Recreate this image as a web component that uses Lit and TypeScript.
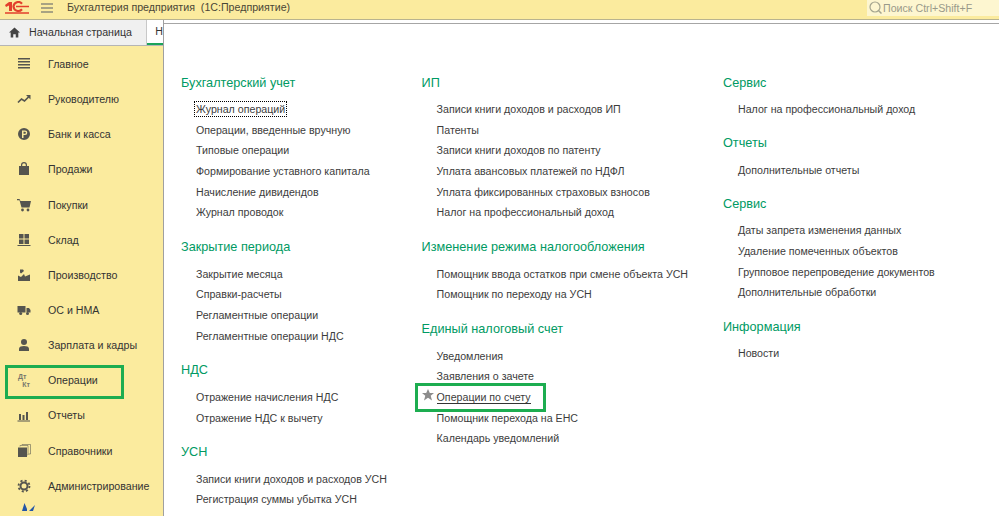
import { LitElement, html, css, svg } from "lit";
import { customElement } from "lit/decorators.js";

const ICONS: Record<string, unknown> = {
  main: svg`<path d="M1 1h12v1.500H1zM1 4h12v1.500H1zM1 7h12v1.500H1zM1 10h12v1.500H1z"/>`,
  chart: svg`<path fill="none" stroke="currentColor" stroke-width="1.700" d="M1 10.500L4.500 7l3 2L12 4.500"/><path d="M9 3h4.500v4.500z"/>`,
  bank: svg`<path fill-rule="evenodd" d="M7 1a6 6 0 1 0 0 12A6 6 0 0 0 7 1zM5 3.500h3a2.300 2.300 0 0 1 0 4.600H6.500V11H5zm1.500 1.300v2h1.400a1 1 0 0 0 0-2z"/>`,
  bag: svg`<path fill-rule="evenodd" d="M2 4h2V3a3 3 0 0 1 6 0v1h2v9H2zM5.200 4h3.600V3a1.800 1.800 0 0 0-3.600 0z"/>`,
  cart: svg`<path d="M0 1h2.500l1 2H14l-1.500 6.500H4.500L2.500 2.200H0z"/><circle cx="5.500" cy="12" r="1.400"/><circle cx="11" cy="12" r="1.400"/>`,
  stock: svg`<path d="M2 1h4.500v4.500H2zM7.500 1H12v4.500H7.500zM2 6.500h4.500V11H2zM7.500 6.500H12V11H7.500zM.5 12h13v1H.5z"/>`,
  factory: svg`<path d="M1 13V7.500l3 1.500 3-3 1 2.500 5-2V13z"/><path d="M3 1.500h3l1 1.500-3 2.500-1-1z"/>`,
  truck: svg`<path d="M.5 3h8v6.500h-8zM9.500 5h2.500l1.500 2v2.500h-4z"/><circle cx="3.700" cy="10.500" r="1.500"/><circle cx="10.500" cy="10.500" r="1.500"/>`,
  person: svg`<circle cx="7" cy="4" r="3"/><path d="M2 13v-2.500C2 8.800 4.500 8 7 8s5 .8 5 2.500V13z"/>`,
  reports: svg`<path d="M2 6h2v6H2zM5.500 7h2v5h-2zM9 4h2v8H9zM.5 12.500h12.500v1H.5z"/>`,
  books: svg`<path d="M1 3.500h9V13H1z"/><path fill="none" stroke="currentColor" stroke-opacity=".55" d="M3 2.500V1.500h8V11h-.5M5 1V.5h8.500V10h-2"/>`,
  gear: svg`<circle cx="7" cy="7" r="3.500" fill="none" stroke="currentColor" stroke-width="2"/><circle cx="7" cy="7" r="5.500" fill="none" stroke="currentColor" stroke-width="1.800" stroke-dasharray="2.100 2.220"/>`,
};

const NAV: [string, string][] = [
  ["Главное", "main"],
  ["Руководителю", "chart"],
  ["Банк и касса", "bank"],
  ["Продажи", "bag"],
  ["Покупки", "cart"],
  ["Склад", "stock"],
  ["Производство", "factory"],
  ["ОС и НМА", "truck"],
  ["Зарплата и кадры", "person"],
  ["Операции", "ops"],
  ["Отчеты", "reports"],
  ["Справочники", "books"],
  ["Администрирование", "gear"],
];

type Group = { title: string; links: string[] };
const COLS: Group[][] = [
  [
    { title: "Бухгалтерский учет", links: ["Журнал операций", "Операции, введенные вручную", "Типовые операции", "Формирование уставного капитала", "Начисление дивидендов", "Журнал проводок"] },
    { title: "Закрытие периода", links: ["Закрытие месяца", "Справки-расчеты", "Регламентные операции", "Регламентные операции НДС"] },
    { title: "НДС", links: ["Отражение начисления НДС", "Отражение НДС к вычету"] },
    { title: "УСН", links: ["Записи книги доходов и расходов УСН", "Регистрация суммы убытка УСН"] },
  ],
  [
    { title: "ИП", links: ["Записи книги доходов и расходов ИП", "Патенты", "Записи книги доходов по патенту", "Уплата авансовых платежей по НДФЛ", "Уплата фиксированных страховых взносов", "Налог на профессиональный доход"] },
    { title: "Изменение режима налогообложения", links: ["Помощник ввода остатков при смене объекта УСН", "Помощник по переходу на УСН"] },
    { title: "Единый налоговый счет", links: ["Уведомления", "Заявления о зачете", "Операции по счету", "Помощник перехода на ЕНС", "Календарь уведомлений"] },
  ],
  [
    { title: "Сервис", links: ["Налог на профессиональный доход"] },
    { title: "Отчеты", links: ["Дополнительные отчеты"] },
    { title: "Сервис", links: ["Даты запрета изменения данных", "Удаление помеченных объектов", "Групповое перепроведение документов", "Дополнительные обработки"] },
    { title: "Информация", links: ["Новости"] },
  ],
];

@customElement("app-root")
export class AppRoot extends LitElement {
  static styles = css`
    :host {
      display: block;
      width: 999px;
      height: 516px;
      overflow: hidden;
      background: #fff;
      font-family: "Liberation Sans", Arial, sans-serif;
      font-size: 10.65px;
      color: #333;
    }
    .top {
      height: 20px;
      box-sizing: border-box;
      background: #fbeb9e;
      border-bottom: 1px solid #b8b38f;
      display: flex;
      align-items: flex-start;
    }
    .logo {
      width: 25px;
      height: 13px;
      margin: 1px 0 0 5px;
      flex: none;
    }
    .burger {
      width: 12px;
      height: 10px;
      margin: 3px 0 0 11px;
      flex: none;
    }
    .app-title {
      margin-left: 14px;
      white-space: pre;
      color: #4a4636;
      line-height: 14px;
      flex: 1;
    }
    .search {
      width: 132px;
      height: 16px;
      background: #fdf6d0;
      display: flex;
      align-items: center;
      gap: 1px;
      color: #9a9a8a;
      padding-left: 2px;
      box-sizing: border-box;
      flex: none;
      white-space: nowrap;
    }
    .body {
      display: flex;
      height: 496px;
    }
    .left {
      width: 164px;
      flex: none;
      display: flex;
      flex-direction: column;
      border-right: 1px solid #a0a0a0;
      box-sizing: border-box;
      background: #fbeb9e;
    }
    .tabs {
      height: 26px;
      flex: none;
      display: flex;
      background: #f0f0f0;
      border-bottom: 1px solid #b5b5b5;
      box-sizing: border-box;
    }
    .home {
      width: 147px;
      display: flex;
      align-items: center;
      box-sizing: border-box;
      padding: 0 0 1px 9px;
      gap: 9px;
      border-right: 1px solid #c8c8c8;
      color: #333;
    }
    .cur {
      flex: 1;
      background: #fff;
      padding: 5px 0 0 8.5px;
      box-sizing: border-box;
      border-bottom: 2px solid #1ba35a;
      line-height: 13px;
    }
    nav {
      flex: 1;
      display: flex;
      flex-direction: column;
      padding-top: 0.35px;
    }
    .item {
      height: 35.17px;
      flex: none;
      display: flex;
      align-items: center;
      padding-left: 17px;
      position: relative;
      color: #333;
      white-space: nowrap;
    }
    .item svg {
      width: 14px;
      height: 14px;
      fill: #55554f;
      color: #55554f;
      margin-right: 17px;
      flex: none;
    }
    .ops-icon {
      width: 14px;
      margin-right: 17px;
      flex: none;
      height: 15px;
      display: flex;
      flex-direction: column;
      gap: 1px;
      font-size: 7px;
      line-height: 7px;
      font-weight: bold;
      color: #77776c;
    }
    .ops-icon span:first-child {
      margin-left: 1px;
    }
    .ops-icon span:last-child {
      align-self: flex-end;
      margin-right: 1px;
    }
    .box-nav::after {
      content: "";
      position: absolute;
      left: 5px;
      top: 2.5px;
      width: 113px;
      height: 28px;
      border: 3px solid #1dad50;
    }
    .more {
      height: 20px;
      flex: none;
      padding-left: 22px;
    }
    .more svg {
      display: block;
      width: 14px;
      height: 14px;
      fill: #2456a6;
    }
    .right {
      flex: 1;
      display: flex;
      flex-direction: column;
      padding-top: 3px;
    }
    .panel {
      flex: 1;
      border-top: 1px solid #a6a6a6;
      background: #fff;
      display: flex;
      padding: 50px 0 0 17px;
      box-sizing: border-box;
      overflow: hidden;
    }
    .col {
      display: flex;
      flex-direction: column;
      gap: 15.5px;
      flex: none;
    }
    .col.c1 { width: 240.6px; }
    .col.c2 { width: 301.4px; }
    .col.c3 { gap: 15px; }
    .g-title {
      font-size: 12.7px;
      line-height: 17px;
      height: 17px;
      padding-top: 0.6px;
      box-sizing: border-box;
      color: #009a63;
      margin-bottom: 8px;
      white-space: nowrap;
    }
    .link {
      height: 20.7px;
      line-height: 20.7px;
      padding-left: 15px;
      color: #3c3c3c;
      white-space: nowrap;
      position: relative;
    }
    .link .t { display: inline-block; line-height: 14px; }
    .focus .t {
      outline: 1px dotted #000;
      margin-left: -1px;
      padding: 0 1px;
    }
    .fav .t {
      border-bottom: 1px solid #333;
      line-height: 12px;
    }
    .fav svg {
      position: absolute;
      left: 0;
      top: 2.5px;
      width: 12px;
      height: 12px;
      fill: #8c8c8c;
    }
    .fav::after {
      content: "";
      position: absolute;
      left: -7px;
      top: -3.5px;
      width: 125px;
      height: 23px;
      border: 3px solid #1dad50;
    }
  `;

  private renderItem(name: string, icon: string) {
    const ops = icon === "ops";
    return html`<div class="item ${ops ? "box-nav" : ""}">
      ${ops
        ? html`<div class="ops-icon"><span>Дт</span><span>Кт</span></div>`
        : html`<svg viewBox="0 0 14 14">${ICONS[icon]}</svg>`}
      ${name}
    </div>`;
  }

  render() {
    return html`
      <div class="top">
        <svg class="logo" viewBox="0 0 25 13">
          <path fill="#e2402c" d="M0 4l4-3h3v9H4V4.500L1 6z" />
          <path fill="none" stroke="#e2402c" stroke-width="2.200" d="M17 2.800A4.800 4.800 0 0 0 8.500 5.500A4.800 4.800 0 0 0 17 8.200" />
          <path fill="#e2402c" d="M11 4.800h13v1.400H11zM0 11.300h24v1.400H0z" />
        </svg>
        <svg class="burger" viewBox="0 0 12 10"><path fill="#a8a382" d="M0 0h12v2H0zM0 4h12v2H0zM0 8h12v2H0z" /></svg>
        <div class="app-title">Бухгалтерия предприятия  (1С:Предприятие)</div>
        <div class="search">
          <svg width="13" height="14" viewBox="0 0 13 14"><circle cx="6" cy="6" r="5" fill="none" stroke="#a5a58f" stroke-width="1.200" /><path d="M9.500 9.500l3 3" stroke="#a5a58f" stroke-width="1.500" /></svg>
          Поиск Ctrl+Shift+F
        </div>
      </div>
      <div class="body">
        <div class="left">
          <div class="tabs">
            <div class="home">
              <svg width="11" height="11" viewBox="0 0 13 12"><path fill="#444" d="M6.500 0L13 6h-2v6H8V8H5v4H2V6H0z" /></svg>
              Начальная страница
            </div>
            <div class="cur">Н</div>
          </div>
          <nav>
            ${NAV.map(([n, i]) => this.renderItem(n, i))}
            <div class="more"><svg viewBox="0 0 14 14"><path d="M0 8L2.500 0 5 6v2zM7 8l6-6-2 6z" /></svg></div>
          </nav>
        </div>
        <div class="right">
          <div class="panel">
            ${COLS.map(
              (col, ci) => html`<div class="col c${ci + 1}">
                ${col.map(
                  (g) => html`<div>
                    <div class="g-title">${g.title}</div>
                    ${g.links.map((l) => {
                      const focus = l === "Журнал операций";
                      const fav = l === "Операции по счету";
                      return html`<div class="link ${focus ? "focus" : ""} ${fav ? "fav" : ""}">
                        ${fav ? html`<svg viewBox="0 0 12 12"><path d="M6 0l1.800 4H12L8.700 6.800 10 11.500 6 8.800 2 11.500 3.300 6.800 0 4h4.200z" /></svg>` : ""}
                        <span class="t">${l}</span>
                      </div>`;
                    })}
                  </div>`
                )}
              </div>`
            )}
          </div>
        </div>
      </div>
    `;
  }
}
